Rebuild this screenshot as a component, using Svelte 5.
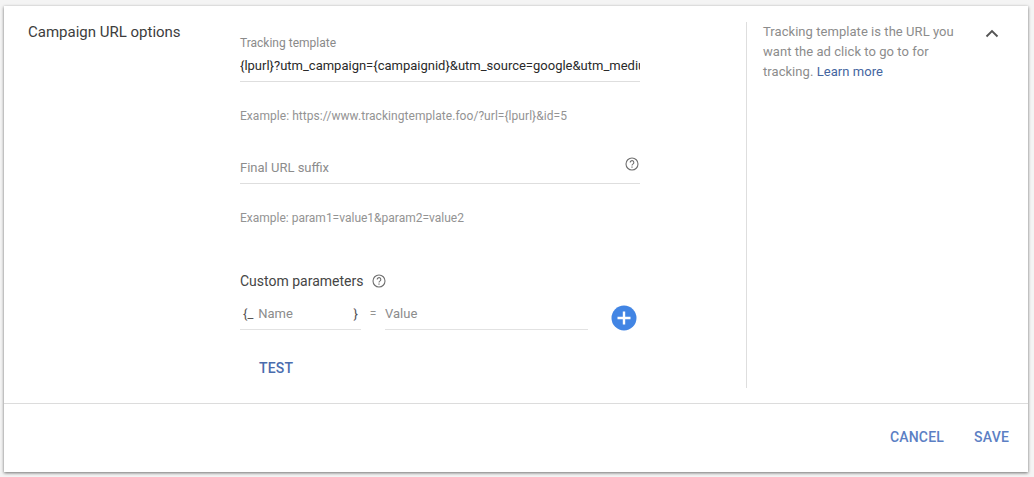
<script>
  const helpPath = "M7 13A6 6 0 1 1 7 1a6 6 0 0 1 0 12z";
</script>

<div class="page">
  <section class="card">
    <div class="main">
      <h2 class="title">Campaign URL options</h2>

      <div class="form">
        <div class="field tracking">
          <span class="label">Tracking template</span>
          <div class="value">{"{lpurl}?utm_campaign={campaignid}&utm_source=google&utm_medium=cpc"}</div>
        </div>
        <p class="hint first">{"Example: https://www.trackingtemplate.foo/?url={lpurl}&id=5"}</p>

        <div class="field suffix">
          <span class="placeholder">Final URL suffix</span>
          <svg class="help" width="14" height="14" viewBox="0 0 14 14" aria-hidden="true">
            <path d={helpPath} fill="none" stroke="#6f6f6f" stroke-width="1.1" />
            <path d="M5.2 5.5a1.8 1.8 0 1 1 2.9 1.4c-.7.5-1.1.8-1.1 1.6" fill="none" stroke="#6f6f6f" stroke-width="1.1" />
            <rect x="6.4" y="9.5" width="1.2" height="1.2" fill="#6f6f6f" />
          </svg>
        </div>
        <p class="hint second">{"Example: param1=value1&param2=value2"}</p>

        <div class="custom-head">
          <span>Custom parameters</span>
          <svg width="14" height="14" viewBox="0 0 14 14" aria-hidden="true">
            <path d={helpPath} fill="none" stroke="#6f6f6f" stroke-width="1.1" />
            <path d="M5.2 5.5a1.8 1.8 0 1 1 2.9 1.4c-.7.5-1.1.8-1.1 1.6" fill="none" stroke="#6f6f6f" stroke-width="1.1" />
            <rect x="6.4" y="9.5" width="1.2" height="1.2" fill="#6f6f6f" />
          </svg>
        </div>

        <div class="params">
          <div class="param-name">
            <span class="brace">{"{_"}</span>
            <span class="placeholder grow">Name</span>
            <span class="brace">{"}"}</span>
          </div>
          <span class="equals">=</span>
          <div class="param-value"><span class="placeholder">Value</span></div>
          <button class="add" aria-label="Add parameter">
            <svg width="26" height="26" viewBox="0 0 26 26" aria-hidden="true">
              <circle cx="13" cy="13" r="12.5" fill="#4285e4" />
              <path d="M13 6.5v13M6.5 13h13" stroke="#fff" stroke-width="2.4" />
            </svg>
          </button>
        </div>

        <button class="text-btn test">TEST</button>
      </div>

      <aside class="side">
        <p>Tracking template is the URL you want the ad click to go to for tracking. <span class="link">Learn more</span></p>
      </aside>

      <div class="chevron">
        <svg width="14" height="9" viewBox="0 0 14 9" aria-hidden="true">
          <path d="M1.5 7.5 7 2l5.5 5.5" fill="none" stroke="#555" stroke-width="1.9" />
        </svg>
      </div>
    </div>

    <footer class="footer">
      <button class="text-btn">CANCEL</button>
      <button class="text-btn">SAVE</button>
    </footer>
  </section>
</div>

<style>
  :global(body) {
    margin: 0;
    background: #f4f4f4;
  }
  .page {
    width: 1034px;
    height: 477px;
    padding: 6px 6px 5px 4px;
    box-sizing: border-box;
    font-family: Roboto, "Liberation Sans", sans-serif;
    overflow: hidden;
  }
  .card {
    height: 466px;
    background: #fff;
    box-shadow: 0 1px 3px rgba(0, 0, 0, 0.55);
    display: flex;
    flex-direction: column;
  }
  .main {
    height: 397px;
    display: flex;
    border-bottom: 1px solid #dcdcdc;
  }
  .title {
    width: 236px;
    flex: none;
    box-sizing: border-box;
    margin: 0;
    padding: 16px 0 0 24px;
    font-size: 15px;
    line-height: 20px;
    font-weight: 400;
    color: #3d3d3d;
  }
  .form {
    width: 400px;
    flex: none;
    padding-top: 29px;
  }
  .field {
    border-bottom: 1px solid #dedede;
    box-sizing: border-box;
  }
  .tracking {
    height: 47px;
  }
  .label {
    display: block;
    font-size: 12px;
    line-height: 16px;
    color: #8a8a8a;
  }
  .value {
    margin-top: 6px;
    font-size: 13px;
    line-height: 18px;
    color: #2a2a2a;
    white-space: nowrap;
    overflow: hidden;
  }
  .hint {
    margin: 0;
    font-size: 12px;
    line-height: 16px;
    color: #939393;
  }
  .hint.first {
    margin-top: 26px;
    letter-spacing: 0.05px;
  }
  .suffix {
    margin-top: 12px;
    height: 48px;
    display: flex;
    justify-content: space-between;
    align-items: flex-start;
    padding-top: 23px;
  }
  .suffix .help {
    margin: -2px 1px 0 0;
  }
  .placeholder {
    display: block;
    font-size: 13px;
    line-height: 18px;
    color: #8c8c8c;
  }
  .hint.second {
    margin-top: 26px;
  }
  .custom-head {
    margin-top: 45px;
    display: flex;
    align-items: center;
    gap: 9px;
    height: 20px;
    font-size: 14px;
    color: #454545;
  }
  .params {
    margin-top: 5px;
    display: flex;
    align-items: flex-start;
  }
  .param-name {
    width: 121px;
    height: 34px;
    box-sizing: border-box;
    padding: 9px 3px 0 3px;
    border-bottom: 1px solid #e2e2e2;
    display: flex;
    gap: 5px;
  }
  .grow {
    flex: 1;
  }
  .brace {
    font-size: 13px;
    line-height: 18px;
    color: #555;
  }
  .equals {
    width: 24px;
    text-align: center;
    padding-top: 9px;
    font-size: 12px;
    line-height: 18px;
    color: #939393;
  }
  .param-value {
    width: 203px;
    height: 34px;
    box-sizing: border-box;
    padding-top: 9px;
    border-bottom: 1px solid #e2e2e2;
  }
  .add {
    margin: 9px 0 0 23px;
    padding: 0;
    width: 26px;
    height: 26px;
    border: 0;
    background: none;
    display: block;
  }
  .text-btn {
    border: 0;
    background: none;
    padding: 0;
    font-family: inherit;
    font-size: 14px;
    line-height: 20px;
    font-weight: 500;
    color: #5c7fc4;
    letter-spacing: 0.2px;
  }
  .test {
    display: block;
    margin: 27px 0 0 19px;
    color: #4a6cae;
  }
  .side {
    flex: none;
    width: 239px;
    height: 366px;
    margin: 16px 0 0 106px;
    box-sizing: border-box;
    border-left: 1px solid #dedede;
    padding-left: 16px;
  }
  .side p {
    margin: 0;
    font-size: 13px;
    line-height: 20px;
    color: #8c8c8c;
    width: 200px;
    letter-spacing: 0.05px;
  }
  .link {
    color: #44659f;
  }
  .chevron {
    margin-top: 23px;
    height: 9px;
  }
  .chevron svg {
    display: block;
  }
  .footer {
    flex: 1;
    display: flex;
    justify-content: flex-end;
    align-items: flex-start;
    gap: 30px;
    padding: 23px 19px 0 0;
  }
</style>
